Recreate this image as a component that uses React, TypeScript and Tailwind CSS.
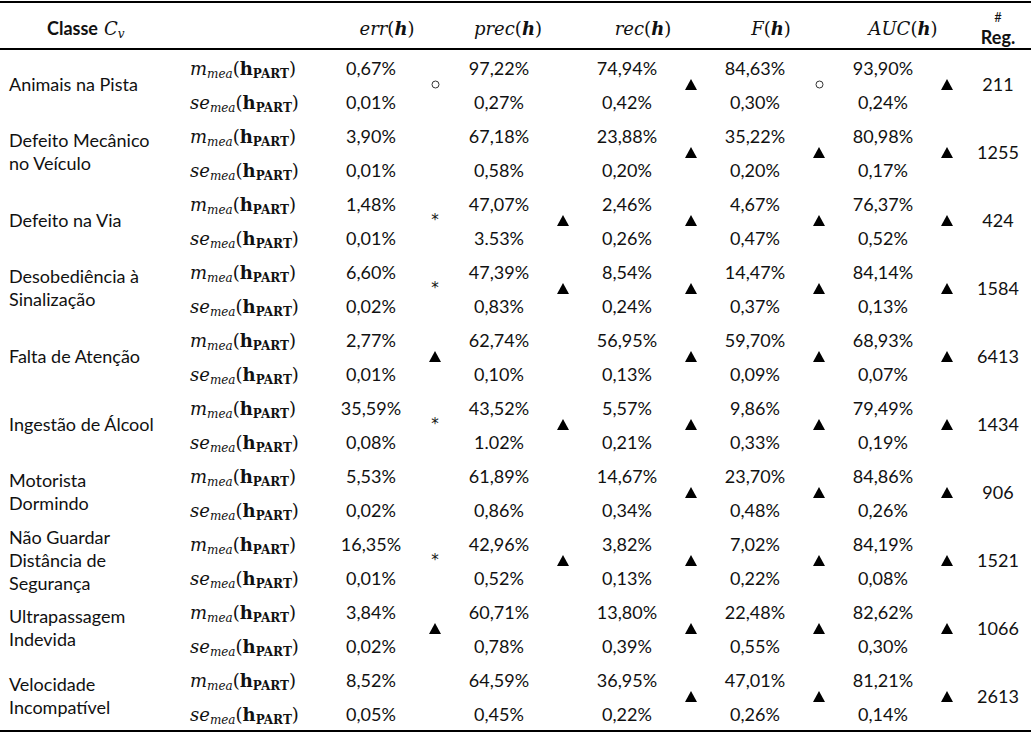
import React from 'react';

type Sym = 'up' | 'o' | '*' | null;

interface ClassRow {
  label: string[];
  m: string[];
  se: string[];
  sym: Sym[];
  reg: string;
}

const rows: ClassRow[] = [
  { label: ['Animais na Pista'], m: ['0,67%', '97,22%', '74,94%', '84,63%', '93,90%'], se: ['0,01%', '0,27%', '0,42%', '0,30%', '0,24%'], sym: ['o', null, 'up', 'o', 'up'], reg: '211' },
  { label: ['Defeito Mecânico', 'no Veículo'], m: ['3,90%', '67,18%', '23,88%', '35,22%', '80,98%'], se: ['0,01%', '0,58%', '0,20%', '0,20%', '0,17%'], sym: [null, null, 'up', 'up', 'up'], reg: '1255' },
  { label: ['Defeito na Via'], m: ['1,48%', '47,07%', '2,46%', '4,67%', '76,37%'], se: ['0,01%', '3.53%', '0,26%', '0,47%', '0,52%'], sym: ['*', 'up', 'up', 'up', 'up'], reg: '424' },
  { label: ['Desobediência à', 'Sinalização'], m: ['6,60%', '47,39%', '8,54%', '14,47%', '84,14%'], se: ['0,02%', '0,83%', '0,24%', '0,37%', '0,13%'], sym: ['*', 'up', 'up', 'up', 'up'], reg: '1584' },
  { label: ['Falta de Atenção'], m: ['2,77%', '62,74%', '56,95%', '59,70%', '68,93%'], se: ['0,01%', '0,10%', '0,13%', '0,09%', '0,07%'], sym: ['up', null, 'up', 'up', 'up'], reg: '6413' },
  { label: ['Ingestão de Álcool'], m: ['35,59%', '43,52%', '5,57%', '9,86%', '79,49%'], se: ['0,08%', '1.02%', '0,21%', '0,33%', '0,19%'], sym: ['*', 'up', 'up', 'up', 'up'], reg: '1434' },
  { label: ['Motorista', 'Dormindo'], m: ['5,53%', '61,89%', '14,67%', '23,70%', '84,86%'], se: ['0,02%', '0,86%', '0,34%', '0,48%', '0,26%'], sym: [null, null, 'up', 'up', 'up'], reg: '906' },
  { label: ['Não Guardar', 'Distância de', 'Segurança'], m: ['16,35%', '42,96%', '3,82%', '7,02%', '84,19%'], se: ['0,01%', '0,52%', '0,13%', '0,22%', '0,08%'], sym: ['*', 'up', 'up', 'up', 'up'], reg: '1521' },
  { label: ['Ultrapassagem', 'Indevida'], m: ['3,84%', '60,71%', '13,80%', '22,48%', '82,62%'], se: ['0,02%', '0,78%', '0,39%', '0,55%', '0,30%'], sym: ['up', null, 'up', 'up', 'up'], reg: '1066' },
  { label: ['Velocidade', 'Incompatível'], m: ['8,52%', '64,59%', '36,95%', '47,01%', '81,21%'], se: ['0,05%', '0,45%', '0,22%', '0,26%', '0,14%'], sym: [null, null, 'up', 'up', 'up'], reg: '2613' },
];

const gridCols =
  'grid grid-cols-[185px_150px_72px_56px_72px_56px_72px_56px_72px_56px_72px_56px_46px]';

const SymbolMark = ({ s }: { s: Sym }) => {
  if (s === 'up')
    return (
      <svg width="12" height="11" viewBox="0 0 12 11">
        <path d="M6 0 L12 11 L0 11 Z" fill="#000" />
      </svg>
    );
  if (s === 'o')
    return (
      <svg width="9" height="9" viewBox="0 0 9 9">
        <circle cx="4.5" cy="4.5" r="3.5" fill="none" stroke="#333" strokeWidth="1" />
      </svg>
    );
  if (s === '*') return <span className="text-[15px] leading-none font-['DejaVu_Sans',sans-serif]">*</span>;
  return null;
};

// m_mea(h_PART) / se_mea(h_PART)
const Mea = ({ v }: { v: string }) => (
  <span className="font-['DejaVu_Serif',serif] text-[18px] whitespace-nowrap">
    <i>{v}</i>
    <sub className="italic text-[12px]">mea</sub>(<b>h</b>
    <sub className="font-bold text-[12px]">PART</sub>)
  </span>
);

const MetricHead = ({ name, pad }: { name: string; pad: string }) => (
  <div className={`col-span-2 flex items-center justify-center pt-[5px] ${pad}`}>
    <span className="font-['DejaVu_Serif',serif] text-[18px] whitespace-nowrap">
      <i>{name}</i>(<b><i>h</i></b>)
    </span>
  </div>
);

export default function App() {
  return (
    <div className="w-[1031px] h-[735px] bg-white pt-px font-['Lato',sans-serif] text-[18px] text-[#111]">
      <div className="border-t-2 border-b-2 border-black">
        {/* header */}
        <div className={`${gridCols} h-[47px] border-b-2 border-black`}>
          <div className="flex items-center pl-[47px] pt-[5px] whitespace-nowrap">
            <span className="font-bold">Classe</span>
            <span className="ml-[6px] font-['DejaVu_Serif',serif]">
              <i>C</i>
              <sub className="italic text-[12px]">v</sub>
            </span>
          </div>
          <div />
          <MetricHead name="err" pad="pr-[24px]" />
          <MetricHead name="prec" pad="pr-[38px]" />
          <MetricHead name="rec" pad="pr-[24px]" />
          <MetricHead name="F" pad="pr-[24px]" />
          <MetricHead name="AUC" pad="pr-[16px]" />
          <div className="flex flex-col items-center justify-center pt-[5px]">
            <span className="text-[13px] leading-[18px]">#</span>
            <span className="leading-[22px] font-bold">Reg.</span>
          </div>
        </div>

        {/* body */}
        {rows.map((r) => (
          <div key={r.reg} className={`${gridCols} grid-rows-[34px_34px]`}>
            <div className="row-span-2 flex flex-col justify-center pl-[9px] leading-[23px]">
              {r.label.map((l) => (
                <span key={l} className="whitespace-nowrap">{l}</span>
              ))}
            </div>
            <div className="flex items-center pl-[5px] pt-[3px]">
              <Mea v="m" />
            </div>
            {r.m.map((val, i) => (
              <React.Fragment key={i}>
                <div className="flex items-center justify-center pt-[3px]">{val}</div>
                <div className="row-span-2 flex items-center justify-center">
                  <SymbolMark s={r.sym[i]} />
                </div>
              </React.Fragment>
            ))}
            <div className="row-span-2 flex items-center justify-center">{r.reg}</div>
            <div className="flex items-center pl-[5px] pt-[3px]">
              <Mea v="se" />
            </div>
            {r.se.map((val, i) => (
              <div key={i} className="flex items-center justify-center pt-[3px]">{val}</div>
            ))}
          </div>
        ))}
      </div>
    </div>
  );
}
